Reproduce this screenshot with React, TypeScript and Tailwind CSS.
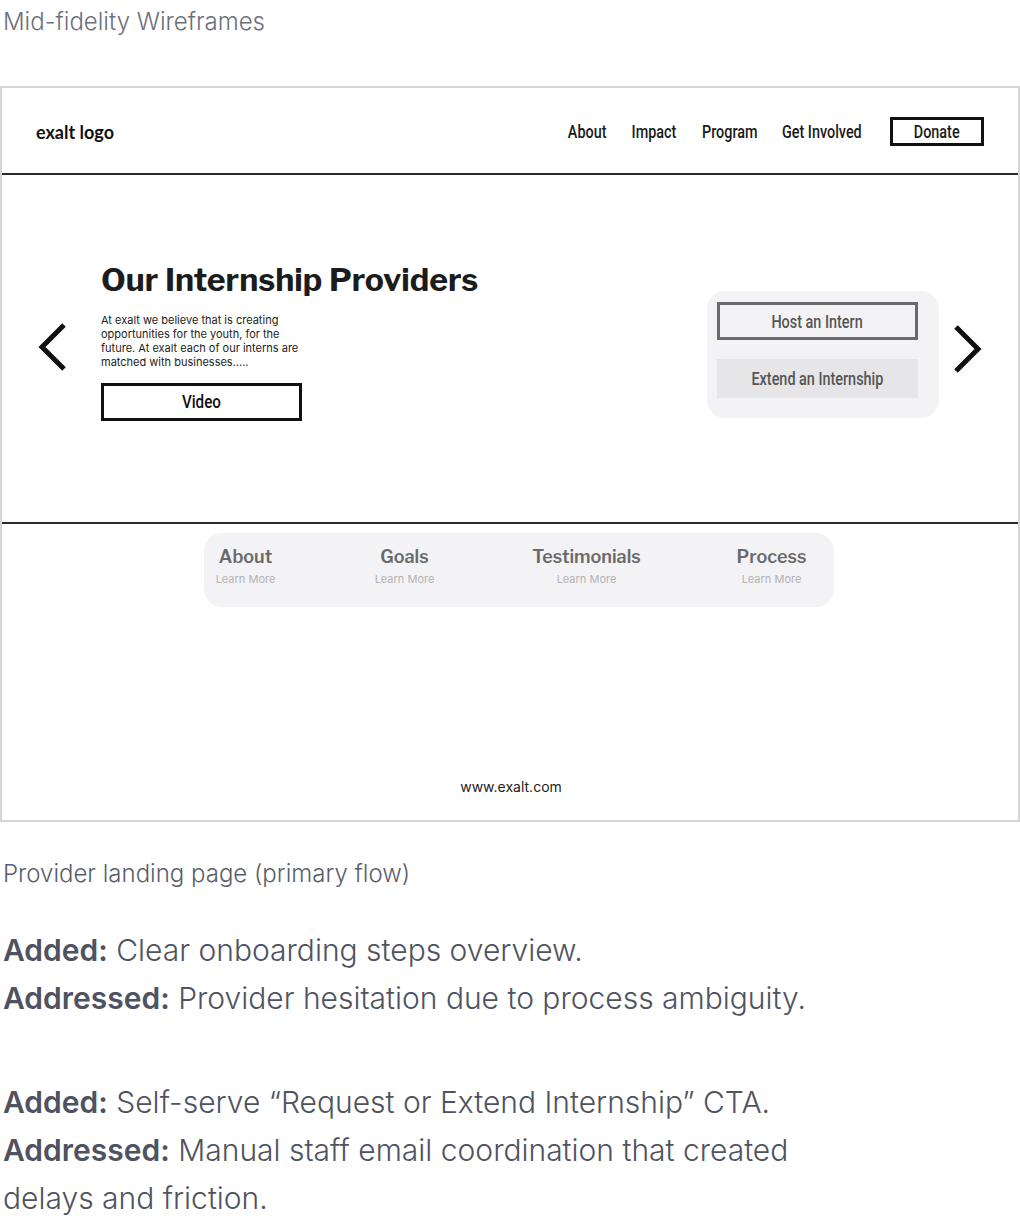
import React from 'react';

// No condensed family installed, so squeeze Roboto horizontally
const Narrow: React.FC<{ children: React.ReactNode; className?: string }> = ({ children, className = '' }) => (
  <span
    className={`inline-block whitespace-nowrap scale-x-[0.8] font-medium ${className}`}
    style={{ fontFamily: 'Roboto, "Liberation Sans", sans-serif' }}
  >
    {children}
  </span>
);

const Chevron: React.FC<{ dir: 'left' | 'right' }> = ({ dir }) => (
  <svg width="32" height="50" viewBox="0 0 32 50" fill="none">
    <path
      d={dir === 'left' ? 'M28 3 L6 25 L28 47' : 'M4 3 L26 25 L4 47'}
      stroke="#111"
      strokeWidth="5"
      strokeLinecap="butt"
      strokeLinejoin="miter"
    />
  </svg>
);

const navItems = [
  { label: 'About', w: 'w-[40px]' },
  { label: 'Impact', w: 'w-[46px]' },
  { label: 'Program', w: 'w-[57px]' },
  { label: 'Get Involved', w: 'w-[80px]' },
];

const tabs = [
  { title: 'About', w: 'w-[84px]' },
  { title: 'Goals', w: 'w-[84px]' },
  { title: 'Testimonials', w: 'w-[130px]' },
  { title: 'Process', w: 'w-[90px]' },
];

const App: React.FC = () => {
  return (
    <div className="w-[1020px] bg-white text-[#5a5e6b]" style={{ fontFamily: 'Inter, "Noto Sans", sans-serif' }}>
      <p className="pl-[3px] pt-[4px] h-[86px] text-[24px] font-light text-[#6b6f7a]">Mid-fidelity Wireframes</p>

      {/* Wireframe */}
      <div className="border-2 border-[#d4d6da] h-[736px] flex flex-col">
        {/* Header */}
        <div className="h-[87px] border-b-2 border-[#2a2a2a] flex items-center justify-between pl-[34px] pr-[34px]">
          <span className="mt-[3px] text-[18px] font-bold text-[#111]" style={{ fontFamily: 'Lato, sans-serif' }}>
            exalt logo
          </span>
          <nav className="flex items-center gap-[24px] text-[18px] text-[#1a1a1a] mt-[2px]">
            {navItems.map((n) => (
              <span key={n.label} className={`${n.w} flex justify-center`}>
                <Narrow>{n.label}</Narrow>
              </span>
            ))}
            <span className="ml-[4px] w-[94px] h-[29px] border-[3px] border-[#111] flex items-center justify-center">
              <Narrow>Donate</Narrow>
            </span>
          </nav>
        </div>

        {/* Hero */}
        <div className="h-[349px] border-b-2 border-[#2a2a2a] flex items-center pl-[34px] pr-[34px]">
          <div className="mt-[-4px]">
            <Chevron dir="left" />
          </div>
          <div className="ml-[33px] mt-[-12px]">
            <h1 className="text-[32px] font-bold text-[#1c1c1c] leading-none" style={{ fontFamily: '"Libre Franklin", Inter, sans-serif' }}>
              Our Internship Providers
            </h1>
            <p className="mt-[17px] w-[212px] text-[11px] leading-[14px] text-[#222]">
              At exalt we believe that is creating opportunities for the youth, for the future. At exalt each of our interns are matched with businesses.....
            </p>
            <div className="mt-[14px] w-[201px] h-[38px] border-[3px] border-[#111] flex items-center justify-center text-[19px] text-[#111]">
              <Narrow>Video</Narrow>
            </div>
          </div>
          <div className="ml-auto flex items-center">
            <div className="w-[232px] h-[127px] rounded-[18px] bg-[#f3f2f5] px-[10px] pt-[11px] flex flex-col mt-[12px]">
              <div className="h-[38px] w-[201px] border-[3px] border-[#6a6a6a] flex items-center justify-center text-[18px] text-[#555]">
                <Narrow>Host an Intern</Narrow>
              </div>
              <div className="mt-[19px] h-[39px] w-[201px] bg-[#e6e5e8] flex items-center justify-center text-[18px] text-[#555]">
                <Narrow>Extend an Internship</Narrow>
              </div>
            </div>
            <div className="ml-[13px]">
              <Chevron dir="right" />
            </div>
          </div>
        </div>

        {/* Tabs */}
        <div className="flex-1 flex flex-col items-center pt-[9px]">
          <div className="ml-[17px] w-[630px] h-[74px] rounded-[18px] bg-[#f3f2f5] flex items-start gap-[75px] pt-[13px]">
            {tabs.map((t) => (
              <div key={t.title} className={`${t.w} shrink-0 flex flex-col items-center`}>
                <span className="text-[18px] font-semibold text-[#6a6a6a] leading-[22px]" style={{ fontFamily: '"Libre Franklin", Inter, sans-serif' }}>
                  {t.title}
                </span>
                <span className="text-[11px] text-[#b3b3b3] leading-[14px] mt-[4px]">Learn More</span>
              </div>
            ))}
          </div>
          <div className="mt-auto mb-[23px] text-[14px] text-[#222] pl-[2px]">www.exalt.com</div>
        </div>
      </div>

      <p className="pl-[3px] mt-[34px] text-[24px] font-light text-[#5a5e6b]">Provider landing page (primary flow)</p>

      <div className="pl-[3px] mt-[34px] text-[30px] font-light leading-[48px] text-[#4f5361]">
        <p>
          <span className="font-semibold">Added:</span> Clear onboarding steps overview.
        </p>
        <p>
          <span className="font-semibold">Addressed:</span> Provider hesitation due to process ambiguity.
        </p>
        <p className="mt-[56px]">
          <span className="font-semibold">Added:</span> Self-serve “Request or Extend Internship” CTA.
        </p>
        <p className="w-[820px]">
          <span className="font-semibold">Addressed:</span> Manual staff email coordination that created delays and friction.
        </p>
      </div>
    </div>
  );
};

export default App;
